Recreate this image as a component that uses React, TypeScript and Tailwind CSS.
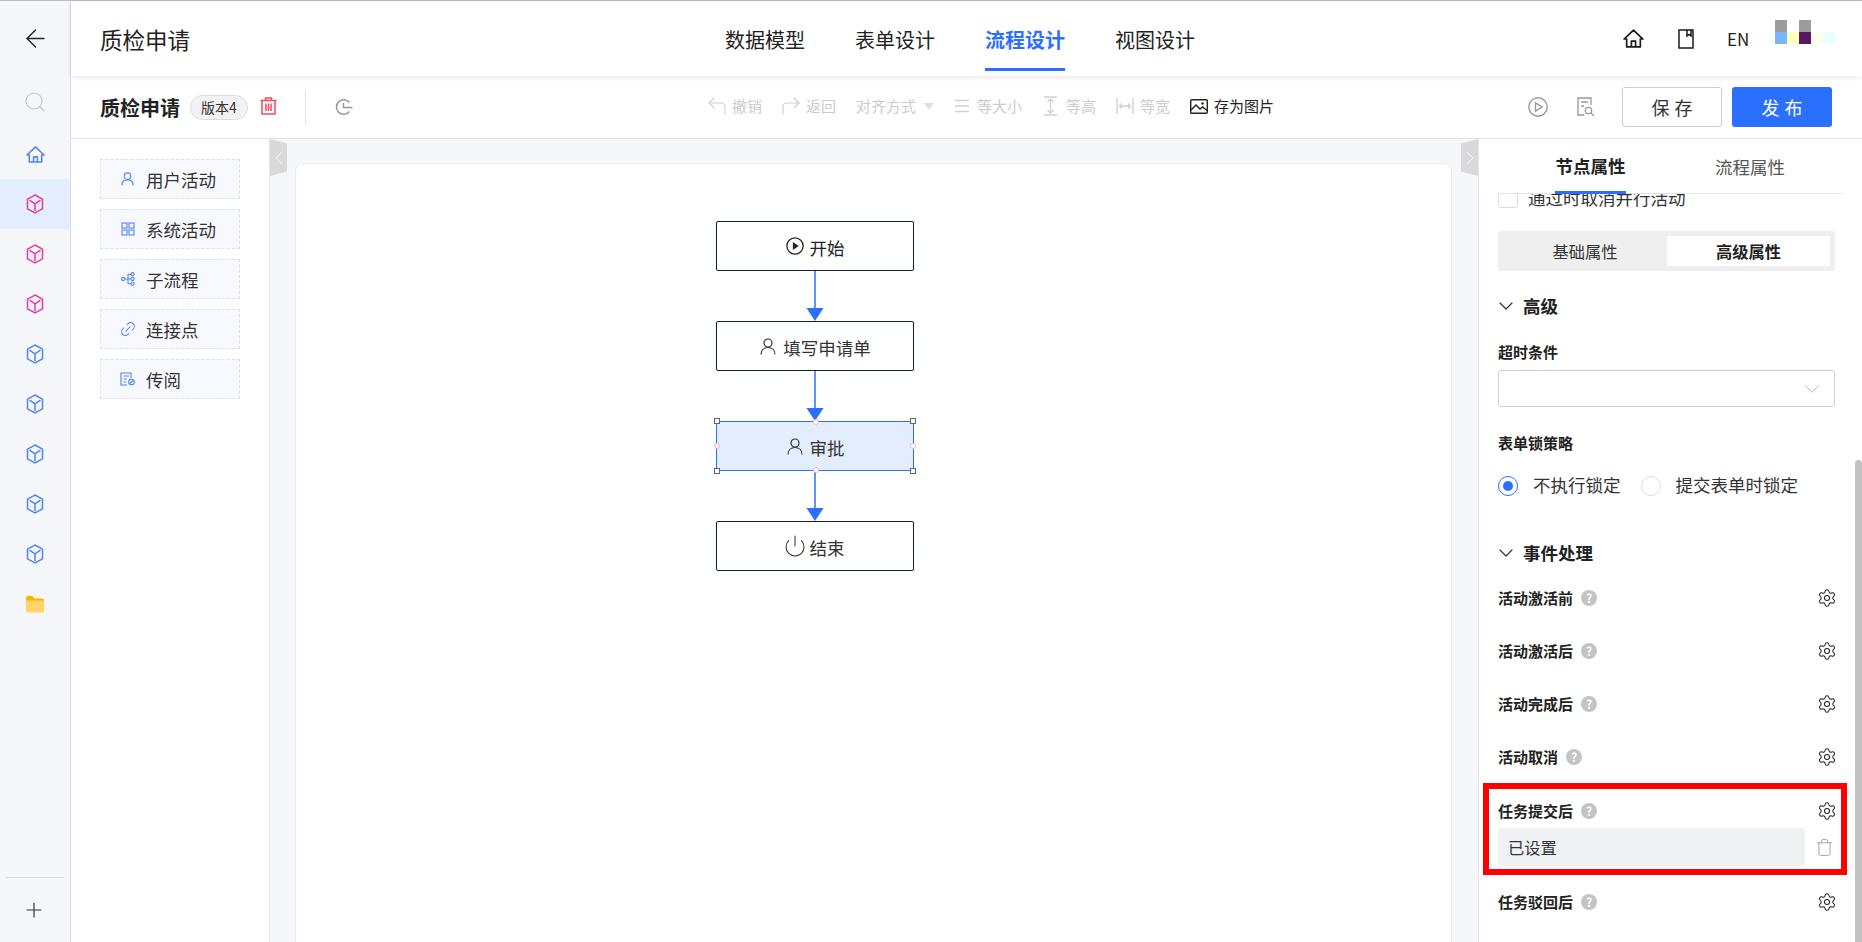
import { ArrowLeft, ChevronDown, ChevronLeft, ChevronRight, CornerUpLeft, CornerUpRight, Link2, Plus, Power, Search, Settings, Trash } from "lucide-react";

const Cube = ({ color }: { color: string }) => (
  <svg width="18" height="20" viewBox="0 0 18 20" fill="none" stroke={color} strokeWidth="1.5">
    <polygon points="9,1 16.5,5.2 16.5,14.8 9,19 1.5,14.8 1.5,5.2" />
    <path d="M3.5 6.2 L9 9.8 L14.5 6.2 M9 9.8 V17" />
  </svg>
);

const Person = ({ color, width, height, stroke }: { color: string; width: number; height: number; stroke: number }) => (
  <svg width={width} height={height} viewBox="0 0 16 17" fill="none" stroke={color} strokeWidth={stroke}>
    <circle cx="8" cy="5" r="4" />
    <path d="M1 16.5 C1 12 4 9.5 8 9.5 S15 12 15 16.5" />
  </svg>
);

const HomeIcon = ({ color, size }: { color: string; size: number }) => (
  <svg width={size} height={size} viewBox="0 0 20 20" fill="none" stroke={color} strokeWidth="1.6" strokeLinejoin="round">
    <path d="M1 10.5 L10 2 L19 10.5 H16.5 V18 H3.5 V10.5 Z" />
    <path d="M8 18 V12.5 H12 V18" />
  </svg>
);

const Folder = () => (
  <svg width="18" height="17" viewBox="0 0 18 17">
    <path d="M0 2 Q0 0 2 0 H6.5 L8.5 2.5 H16.5 Q18 2.5 18 4 V6 H0 Z" fill="#ffb300" />
    <path d="M0 4.5 H16.5 Q18 4.5 18 6 V15 Q18 16.5 16.5 16.5 H1.5 Q0 16.5 0 15 Z" fill="#ffd666" />
  </svg>
);

const SmallGrid = () => (
  <svg width="14" height="14" viewBox="0 0 14 14" fill="none" stroke="#4d84f7" strokeWidth="1.1">
    <rect x="1" y="1" width="5" height="5" />
    <rect x="8" y="1" width="5" height="5" />
    <rect x="1" y="8" width="5" height="5" />
    <rect x="8" y="8" width="5" height="5" />
  </svg>
);

const SubFlow = () => (
  <svg width="14" height="14" viewBox="0 0 14 14" fill="none" stroke="#4d84f7" strokeWidth="1.1">
    <circle cx="2.2" cy="7" r="1.6" />
    <circle cx="11.5" cy="2.2" r="1.6" />
    <circle cx="11.5" cy="7" r="1.6" />
    <circle cx="11.5" cy="11.8" r="1.6" />
    <path d="M4 7 H10 M7 2.2 H10 M7 11.8 H10 M7 2.2 V11.8" />
  </svg>
);

const ReadDoc = () => (
  <svg width="16" height="14" viewBox="0 0 16 14" fill="none" stroke="#4d84f7" strokeWidth="1.1">
    <path d="M11 6 V1 H1 V13 H7" />
    <path d="M3.5 4 H9 M3.5 7 H7 M3.5 10 H6" />
    <circle cx="11.5" cy="10" r="2.8" />
    <path d="M10 11.5 L13 8.5" />
  </svg>
);

const RedTrash = () => (
  <svg width="17" height="18" viewBox="0 0 17 18" fill="none" stroke="#f5475d" strokeWidth="1.5">
    <path d="M0.5 3.5 H16.5 M5.5 3.5 V1 H11.5 V3.5" />
    <path d="M2 3.5 V17 H15 V3.5" />
    <path d="M6 6.5 V14 M8.5 6.5 V14 M11 6.5 V14" />
  </svg>
);

const History = () => (
  <svg width="18" height="18" viewBox="0 0 18 18" fill="none" stroke="#999" strokeWidth="1.5">
    <path d="M14.5 4.5 A7.3 7.3 0 1 0 14.5 13.5" />
    <path d="M8.5 5 V9.5 H17.5" />
  </svg>
);

const SameSize = () => (
  <svg width="14" height="14" viewBox="0 0 14 14" stroke="#d0d0d0" strokeWidth="1.4">
    <path d="M0 1.5 H14 M0 7 H14 M0 12.5 H14" />
  </svg>
);

const SameHeight = () => (
  <svg width="15" height="20" viewBox="0 0 15 20" fill="none" stroke="#d0d0d0" strokeWidth="1.3">
    <path d="M1 1 H14 M1 19 H14 M7.5 3 V17 M4.5 6 L7.5 3 L10.5 6 M4.5 14 L7.5 17 L10.5 14" />
  </svg>
);

const SameWidth = () => (
  <svg width="18" height="16" viewBox="0 0 18 16" fill="none" stroke="#d0d0d0" strokeWidth="1.3">
    <path d="M1 0 V16 M17 0 V16 M3.5 8 H14.5 M6 5.5 L3.5 8 L6 10.5 M12 5.5 L14.5 8 L12 10.5" />
  </svg>
);

const SaveImage = () => (
  <svg width="18" height="15" viewBox="0 0 18 15" fill="none" stroke="#222" strokeWidth="1.4">
    <rect x="0.7" y="0.7" width="16.6" height="13.6" rx="1" />
    <path d="M1 11 L6 6 L10 10 L12.5 8 L17 11.5" />
    <circle cx="12.5" cy="4.5" r="1.2" fill="#222" stroke="none" />
  </svg>
);

const PlayOutline = () => (
  <svg width="20" height="20" viewBox="0 0 20 20" fill="none" stroke="#999" strokeWidth="1.4">
    <circle cx="10" cy="10" r="9.2" />
    <path d="M7.5 5.8 L14 10 L7.5 14.2 Z" />
  </svg>
);

const DocSearch = () => (
  <svg width="18" height="20" viewBox="0 0 18 20" fill="none" stroke="#999" strokeWidth="1.3">
    <path d="M14 8 V1 H1 V18 H7" />
    <path d="M4 5 H11 M4 9 H7" />
    <circle cx="11.5" cy="13.5" r="3.2" />
    <path d="M14 16 L17 19" />
  </svg>
);

const Book = () => (
  <svg width="16" height="20" viewBox="0 0 16 20" fill="none" stroke="#1a1a1a" strokeWidth="1.5">
    <rect x="1" y="1" width="14" height="18" />
    <path d="M9 1 V7 L11 5.5 L13 7 V1" />
  </svg>
);

const PlayFilled = () => (
  <svg width="18" height="18" viewBox="0 0 17 17" fill="none" stroke="#222" strokeWidth="1.2">
    <circle cx="8.5" cy="8.5" r="7.7" />
    <path d="M6.5 4.8 L12 8.5 L6.5 12.2 Z" fill="#222" stroke="none" />
  </svg>
);

const Connector = () => (
  <svg className="block" width="198" height="50" viewBox="0 0 198 50">
    <line x1="99" y1="0" x2="99" y2="38" stroke="#2b6fff" strokeWidth="1.5" />
    <polygon points="90.5,37 107.5,37 99,50" fill="#2b6fff" />
  </svg>
);

const Help = () => (
  <span className="w-4 h-4 rounded-full bg-[#c4c4c4] text-white text-[12px] leading-4 font-bold text-center">?</span>
);

const EventRow = ({ label, className }: { label: string; className: string }) => (
  <div className={"flex items-center h-5 " + className}>
    <span className="text-[15px] leading-5 font-semibold text-[#222]">{label}</span>
    <span className="ml-2 flex"><Help /></span>
    <Settings className="ml-auto mr-[-2px]" size={20} strokeWidth={1.25} color="#222" />
  </div>
);

const Handle = ({ className }: { className: string }) => (
  <span className={"absolute w-[6px] h-[6px] bg-white border border-[#666] " + className}></span>
);

const Port = ({ className }: { className: string }) => (
  <span className={"absolute w-[6px] h-[6px] rounded-full bg-white border border-[#f4b4b0] " + className}></span>
);

const App = () => {
  const pinkCubes = [1, 2, 3];
  const blueCubes = [1, 2, 3, 4, 5];
  const tabs = ["数据模型", "表单设计", "流程设计", "视图设计"];
  const palette = [
    { id: 1, icon: <Person color="#4d84f7" width={13} height={14} stroke={1.4} />, label: "用户活动" },
    { id: 2, icon: <SmallGrid />, label: "系统活动" },
    { id: 3, icon: <SubFlow />, label: "子流程" },
    { id: 4, icon: <Link2 size={18} strokeWidth={1.3} color="#4d84f7" className="-rotate-45" />, label: "连接点" },
    { id: 5, icon: <ReadDoc />, label: "传阅" },
  ];

  return (
    <div className="w-[1862px] h-[942px] flex flex-col overflow-hidden bg-white text-[#222] font-['Noto_Sans_CJK_SC',sans-serif]">
      <div className="h-px bg-[#bdbdbd] flex-shrink-0"></div>
      <div className="flex flex-1 min-h-0">
        {/* left rail */}
        <div className="w-[71px] flex-shrink-0 flex flex-col items-stretch bg-[#f5f7fa] border-r border-[#dedede]">
          <div className="h-[74px] flex items-center justify-center">
            <ArrowLeft size={29} strokeWidth={1.15} color="#222" />
          </div>
          <div className="h-[50px] mt-[2px] flex items-center justify-center">
            <Search size={24} strokeWidth={1.15} color="#c4c4c4" />
          </div>
          <div className="h-[50px] mt-[2px] flex items-center justify-center">
            <HomeIcon color="#4d84f7" size={19} />
          </div>
          {pinkCubes.map((id) => (
            <div key={id} className={"h-[50px] flex items-center justify-center " + (id === 1 ? "bg-[#e4eefe]" : "")}>
              <Cube color="#f0379b" />
            </div>
          ))}
          {blueCubes.map((id) => (
            <div key={id} className="h-[50px] flex items-center justify-center">
              <Cube color="#4d84f7" />
            </div>
          ))}
          <div className="h-[50px] flex items-center justify-center">
            <Folder />
          </div>
          <div className="mt-auto mx-[6px] h-[65px] border-t border-[#dcdcdc] flex items-center justify-center pr-[2px]">
            <Plus size={24} strokeWidth={1.2} color="#333" />
          </div>
        </div>

        <div className="flex-1 min-w-0 flex flex-col">
          {/* top header */}
          <div className="relative z-10 h-[75px] flex-shrink-0 flex items-start bg-white shadow-[0_1px_6px_rgba(0,0,0,0.1)]">
            <div className="w-[654px] h-[75px] pl-[29px] flex items-center text-[22.5px] leading-8 text-[#222]">质检申请</div>
            <div className="flex gap-[50px]">
              {tabs.map((tab) => (
                <div
                  key={tab}
                  className={
                    "h-[70px] pt-[11px] flex items-center text-[20px] leading-7 border-b-[3px] " +
                    (tab === "流程设计" ? "font-bold text-[#2b6fff] border-[#2b6fff]" : "text-[#222] border-transparent")
                  }
                >
                  {tab}
                </div>
              ))}
            </div>
            <div className="ml-[428px] h-[75px] flex items-center">
              <HomeIcon color="#1a1a1a" size={21} />
              <div className="ml-[34px]"><Book /></div>
              <div className="ml-[33px] text-[17px] text-[#222]">EN</div>
              <div className="ml-[26px] -mt-[13px] flex flex-col">
                <div className="flex h-3">
                  <div className="w-3 bg-[#9c9c9c]"></div>
                  <div className="w-3"></div>
                  <div className="w-3 bg-[#9c9c9c]"></div>
                </div>
                <div className="flex h-3">
                  <div className="w-3 bg-[#78b4ff]"></div>
                  <div className="w-3 bg-[#ffffc0]"></div>
                  <div className="w-3 bg-[#551a5f]"></div>
                  <div className="w-3 bg-[#fffff0]"></div>
                  <div className="w-3 bg-[#e8ffff]"></div>
                </div>
              </div>
            </div>
          </div>

          {/* toolbar */}
          <div className="h-[63px] flex-shrink-0 flex items-center bg-white border-b border-[#e3e3e3] pl-[29px] pr-[30px]">
            <div className="text-[20px] leading-7 font-bold text-[#222] pt-[2px]">质检申请</div>
            <div className="ml-[10px] w-[58px] h-[25px] rounded-full bg-[#f2f2f2] border border-[#dcdcdc] flex items-center justify-center text-[14px] text-[#333]">版本4</div>
            <div className="ml-3 -mt-[3px]"><RedTrash /></div>
            <div className="ml-[28px] w-px h-[34px] bg-[#e3e3e3]"></div>
            <div className="ml-[29px]"><History /></div>

            <div className="ml-[352px] flex items-center text-[15px] leading-5 text-[#cccccc] -mt-[2px]">
              <CornerUpLeft size={24} strokeWidth={1.2} color="#d0d0d0" />
              <span className="ml-[3px]">撤销</span>
              <CornerUpRight className="ml-[17px]" size={24} strokeWidth={1.2} color="#d0d0d0" />
              <span className="ml-[3px]">返回</span>
              <span className="ml-5">对齐方式</span>
              <span className="ml-2 w-0 h-0 border-x-[5px] border-x-transparent border-t-[7px] border-t-[#e0e0e0]"></span>
              <span className="ml-[21px]"><SameSize /></span>
              <span className="ml-2">等大小</span>
              <span className="ml-[21px]"><SameHeight /></span>
              <span className="ml-2">等高</span>
              <span className="ml-5"><SameWidth /></span>
              <span className="ml-[6px]">等宽</span>
              <span className="ml-5"><SaveImage /></span>
              <span className="ml-[6px] text-[#222]">存为图片</span>
            </div>

            <div className="ml-auto flex items-center">
              <PlayOutline />
              <div className="ml-[29px]"><DocSearch /></div>
              <button className="ml-[27px] w-[100px] h-10 rounded-[3px] border border-[#cfcfcf] bg-white text-[18px] tracking-[5px] pl-[5px] text-[#333]">保存</button>
              <button className="ml-[10px] w-[100px] h-10 rounded-[3px] bg-[#2b6fff] text-[18px] tracking-[5px] pl-[5px] text-white">发布</button>
            </div>
          </div>

          {/* body */}
          <div className="flex flex-1 min-h-0">
            <div className="w-[199px] flex-shrink-0 border-r border-[#e3e3e3] pl-[29px] pt-5 flex flex-col gap-[10px]">
              {palette.map((item) => (
                <div key={item.id} className="w-[140px] h-10 flex items-center border border-dashed border-[#d9dfee] bg-[#f8f9fe]">
                  <div className="w-[45px] flex justify-center pl-2">{item.icon}</div>
                  <span className="text-[17.5px] leading-6 text-[#333] pt-[2px]">{item.label}</span>
                </div>
              ))}
            </div>

            <div className="relative flex-1 min-w-0 bg-[#f5f7fa] pt-6 pl-[25px] pr-[26px]">
              <div className="absolute left-0 top-0 w-[17px] h-[37px] bg-[#d9d9d9] [clip-path:polygon(0_0,100%_12%,100%_88%,0_100%)] flex items-center justify-center">
                <ChevronLeft className="flex-shrink-0" size={24} strokeWidth={1} color="#f5f7fa" />
              </div>
              <div className="absolute right-0 top-0 w-[17px] h-[37px] bg-[#d9d9d9] [clip-path:polygon(0_12%,100%_0,100%_100%,0_88%)] flex items-center justify-center">
                <ChevronRight className="flex-shrink-0" size={24} strokeWidth={1} color="#f5f7fa" />
              </div>
              <div className="h-full bg-white rounded-t-lg border border-b-0 border-[#ececec] pt-[57px]">
                <div className="ml-[420px] w-[198px] flex flex-col">
                  <div className="h-[50px] rounded-[2px] border border-[#0c2233] flex items-center justify-center gap-[6px]">
                    <PlayFilled />
                    <span className="text-[17.5px] leading-6 text-[#222] pt-1">开始</span>
                  </div>
                  <Connector />
                  <div className="h-[50px] rounded-[2px] border border-[#0c2233] flex items-center justify-center gap-[7px] pl-[1px]">
                    <Person color="#333" width={16} height={17} stroke={1.2} />
                    <span className="text-[17.5px] leading-6 text-[#333] pt-1">填写申请单</span>
                  </div>
                  <Connector />
                  <div className="relative h-[50px] border border-[#2b6fff] bg-[#e3edfd] flex items-center justify-center gap-[7px] pl-[1px]">
                    <Person color="#333" width={16} height={17} stroke={1.2} />
                    <span className="text-[17.5px] leading-6 text-[#333] pt-1">审批</span>
                    <Handle className="-left-[3px] -top-[4px]" />
                    <Handle className="-right-[3px] -top-[4px]" />
                    <Handle className="-left-[3px] -bottom-[4px]" />
                    <Handle className="-right-[3px] -bottom-[4px]" />
                    <Port className="left-[96px] -top-[3px]" />
                    <Port className="left-[96px] -bottom-[3px]" />
                    <Port className="-left-[3px] top-[21px]" />
                    <Port className="-right-[3px] top-[21px]" />
                  </div>
                  <Connector />
                  <div className="h-[50px] rounded-[2px] border border-[#0c2233] flex items-center justify-center gap-[3px] pr-[3px]">
                    <Power size={24} strokeWidth={1.05} color="#333" />
                    <span className="text-[17.5px] leading-6 text-[#333] pt-1">结束</span>
                  </div>
                </div>
              </div>
            </div>

            {/* right properties panel */}
            <div className="relative w-[384px] flex-shrink-0 border-l border-[#e3e3e3] bg-white overflow-hidden">
              <div className="h-[55px] ml-[19px] mr-[19px] border-b border-[#e3e3e3] flex">
                <div className="ml-[57px] w-[71px] h-[55px] border-b-[3px] border-[#2b6fff] flex items-center justify-center text-[17.5px] leading-6 font-bold text-[#222] pt-[2px]">节点属性</div>
                <div className="ml-[89px] flex items-center h-[54px] text-[17.5px] leading-6 text-[#555] pt-[2px]">流程属性</div>
              </div>

              <div className="pl-[19px] pr-[27px]">
                <div className="h-[14px] overflow-hidden flex items-end">
                  <div className="w-5 h-5 flex-shrink-0 rounded-[3px] border border-[#dcdcdc]"></div>
                  <span className="ml-[10px] text-[17.5px] leading-[22px] text-[#333] -mb-[1px]">通过时取消并行活动</span>
                </div>

                <div className="mt-[23px] h-10 rounded-[3px] bg-[#efefef] flex items-center p-[5px]">
                  <div className="w-[164px] text-center text-[16.25px] leading-[30px] text-[#333]">基础属性</div>
                  <div className="flex-1 h-[30px] rounded-[2px] bg-white text-center text-[16.25px] leading-[30px] font-bold text-[#222]">高级属性</div>
                </div>

                <div className="mt-[23px] flex items-center h-6">
                  <ChevronDown size={24} strokeWidth={1.2} color="#333" className="-ml-1" />
                  <span className="ml-[5px] text-[17.5px] leading-6 font-bold text-[#222]">高级</span>
                </div>

                <div className="mt-[24px] text-[15px] leading-5 font-semibold text-[#222]">超时条件</div>
                <div className="mt-2 h-[37px] rounded-[3px] border border-[#cfcfcf] flex items-center justify-end pr-[9px]">
                  <ChevronDown size={26} strokeWidth={0.9} color="#b8b8b8" />
                </div>

                <div className="mt-[26px] text-[15px] leading-5 font-semibold text-[#222]">表单锁策略</div>

                <div className="mt-[23px] flex items-center h-5">
                  <span className="w-5 h-5 rounded-full border border-[#2b6fff] flex items-center justify-center">
                    <span className="w-[10px] h-[10px] rounded-full bg-[#2b6fff]"></span>
                  </span>
                  <span className="ml-[15px] text-[17.5px] leading-6 text-[#333] -mt-[2px]">不执行锁定</span>
                  <span className="ml-[20px] w-5 h-5 rounded-full border border-[#dcdcdc]"></span>
                  <span className="ml-[15px] text-[17.5px] leading-6 text-[#333] -mt-[2px]">提交表单时锁定</span>
                </div>

                <div className="mt-[45px] flex items-center h-6">
                  <ChevronDown size={24} strokeWidth={1.2} color="#333" className="-ml-1" />
                  <span className="ml-[5px] text-[17.5px] leading-6 font-bold text-[#222]">事件处理</span>
                </div>

                <EventRow label="活动激活前" className="mt-[23px]" />
                <EventRow label="活动激活后" className="mt-[33px]" />
                <EventRow label="活动完成后" className="mt-[33px]" />
                <EventRow label="活动取消" className="mt-[33px]" />
                <EventRow label="任务提交后" className="mt-[34px]" />
                <div className="mt-[7px] flex items-center">
                  <div className="w-[307px] h-[38px] rounded-[3px] bg-[#f0f1f5] pl-[10px] flex items-center text-[16.25px] leading-6 text-[#333]">已设置</div>
                  <Trash className="ml-[10px]" size={19} strokeWidth={1.1} color="#999" />
                </div>
                <EventRow label="任务驳回后" className="mt-[26px]" />
              </div>

              {/* overlays */}
              <div className="absolute left-[4px] top-[644px] w-[364px] h-[92px] border-[6px] border-[#ff0000]"></div>
              <div className="absolute right-0 top-[321px] bottom-0 w-[7px] rounded-t-[4px] bg-[#c1c1c1]"></div>
            </div>
          </div>
        </div>
      </div>
    </div>
  );
};

export default App;
